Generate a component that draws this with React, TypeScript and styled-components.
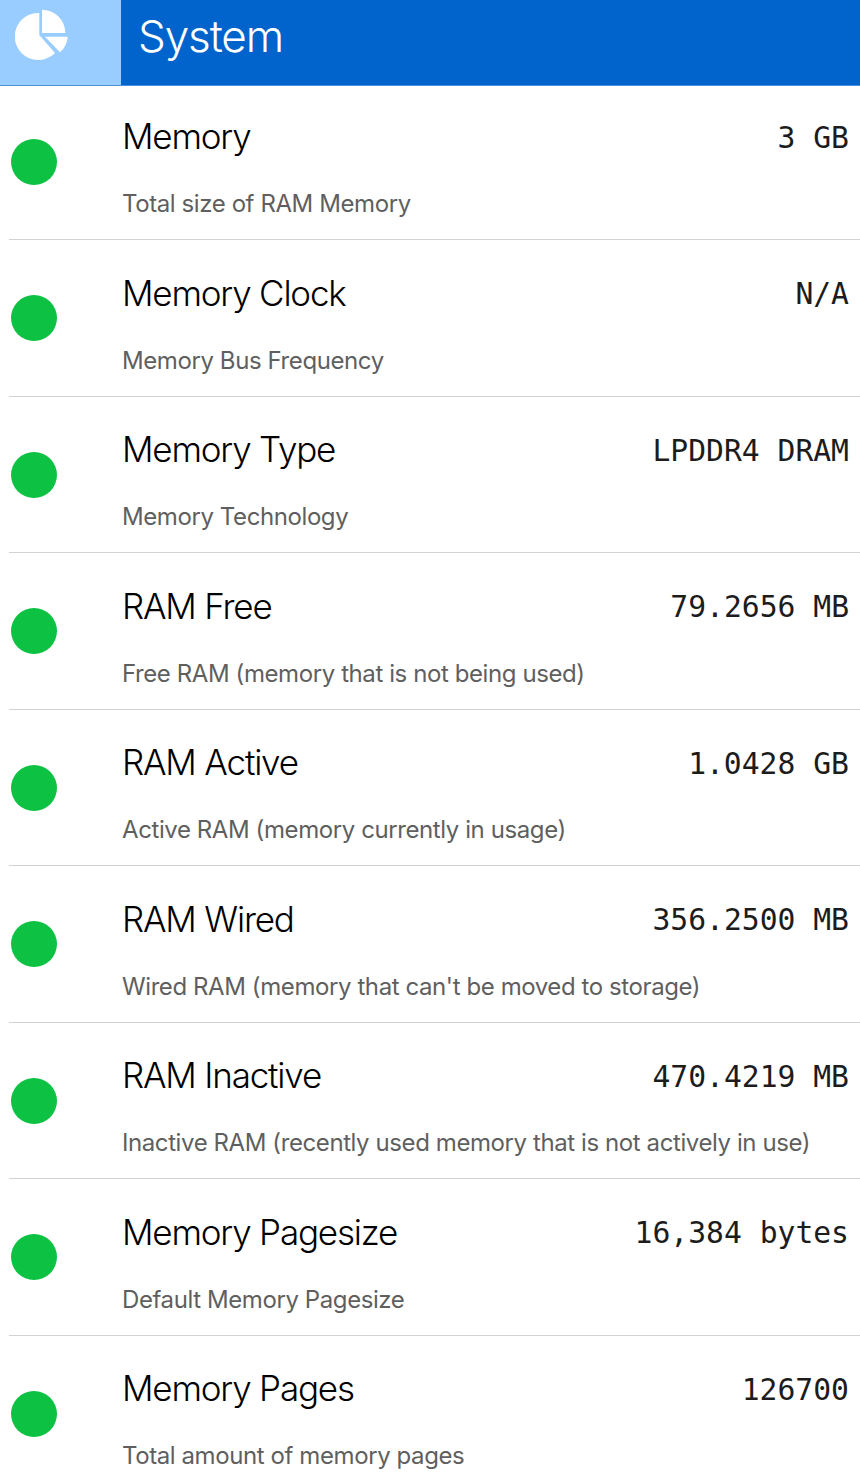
import { FC } from 'react'
import styled, { createGlobalStyle } from 'styled-components'

const GlobalStyle = createGlobalStyle`
  html, body {
    margin: 0;
    padding: 0;
    background: #fff;
  }
  body {
    font-family: Inter, "Liberation Sans", sans-serif;
  }
`

const Page = styled.div`
  width: 860px;
  height: 1474px;
  overflow: hidden;
`

const Header = styled.header`
  display: flex;
  height: 85px;
  background: #0064cc;
  border-bottom: 1px solid #4a90da;
  box-sizing: content-box;
`

const IconBox = styled.div`
  width: 121px;
  background: #99ccff;
  display: flex;
  padding: 9px 0 0 15px;
  box-sizing: border-box;
`

const HeaderTitle = styled.h1`
  margin: 0;
  padding-left: 17px;
  font-size: 44px;
  line-height: 72px;
  font-weight: 300;
  color: #fff;
  letter-spacing: -1.1px;
`

const List = styled.div`
  padding-left: 9px;
`

const Dot = styled.span`
  grid-row: 1 / 3;
  width: 46px;
  height: 46px;
  margin: 24.5px 0 0 2px;
  border-radius: 50%;
  background: #0dc243;
`

const Row = styled.div`
  display: grid;
  grid-template-columns: 113px 1fr auto;
  grid-template-rows: 75px auto;
  height: 156.5px;
  box-sizing: border-box;
  border-bottom: 1px solid #d2d2d2;
  padding: 30.5px 11px 0 0;

  &:first-child {
    height: 154px;
    padding-top: 28px;
  }
  &:first-child ${Dot} {
    margin-top: 25px;
  }
`

const Name = styled.div`
  font-size: 35px;
  line-height: 44px;
  font-weight: 300;
  color: #000;
  letter-spacing: -1.2px;
`

const Value = styled.div`
  font-family: "DejaVu Sans Mono", "Liberation Mono", monospace;
  font-size: 29.7px;
  line-height: 44px;
  color: #1c1c1c;
  white-space: pre;
  margin-top: 1.5px;
`

const Description = styled.div`
  grid-column: 2 / 4;
  font-size: 24px;
  line-height: 30px;
  color: #5f5f5f;
  letter-spacing: -0.41px;
`

const PieIcon: FC = () => (
  <svg width="54" height="54" viewBox="0 0 54 54" fill="#fff">
    <path d="M24.3 4 A23.5 23.5 0 1 0 40 44 L24.3 26 Z" />
    <path d="M27 0.7 A23.3 23.3 0 0 1 50.3 24 L27 24 Z" />
    <path d="M30 27.7 L52.7 27.7 A23 23 0 0 1 45 43.3 Z" />
  </svg>
)

interface IMetric {
  name: string
  value: string
  description: string
}

const metrics: IMetric[] = [
  { name: 'Memory', value: '3 GB', description: 'Total size of RAM Memory' },
  { name: 'Memory Clock', value: 'N/A', description: 'Memory Bus Frequency' },
  { name: 'Memory Type', value: 'LPDDR4 DRAM', description: 'Memory Technology' },
  { name: 'RAM Free', value: '79.2656 MB', description: 'Free RAM (memory that is not being used)' },
  { name: 'RAM Active', value: '1.0428 GB', description: 'Active RAM (memory currently in usage)' },
  { name: 'RAM Wired', value: '356.2500 MB', description: "Wired RAM (memory that can't be moved to storage)" },
  { name: 'RAM Inactive', value: '470.4219 MB', description: 'Inactive RAM (recently used memory that is not actively in use)' },
  { name: 'Memory Pagesize', value: '16,384 bytes', description: 'Default Memory Pagesize' },
  { name: 'Memory Pages', value: '126700', description: 'Total amount of memory pages' },
]

const App: FC = () => (
  <Page>
    <GlobalStyle />
    <Header>
      <IconBox>
        <PieIcon />
      </IconBox>
      <HeaderTitle>System</HeaderTitle>
    </Header>
    <List>
      {metrics.map((metric) => (
        <Row key={metric.name}>
          <Dot />
          <Name>{metric.name}</Name>
          <Value>{metric.value}</Value>
          <Description>{metric.description}</Description>
        </Row>
      ))}
    </List>
  </Page>
)

export default App
